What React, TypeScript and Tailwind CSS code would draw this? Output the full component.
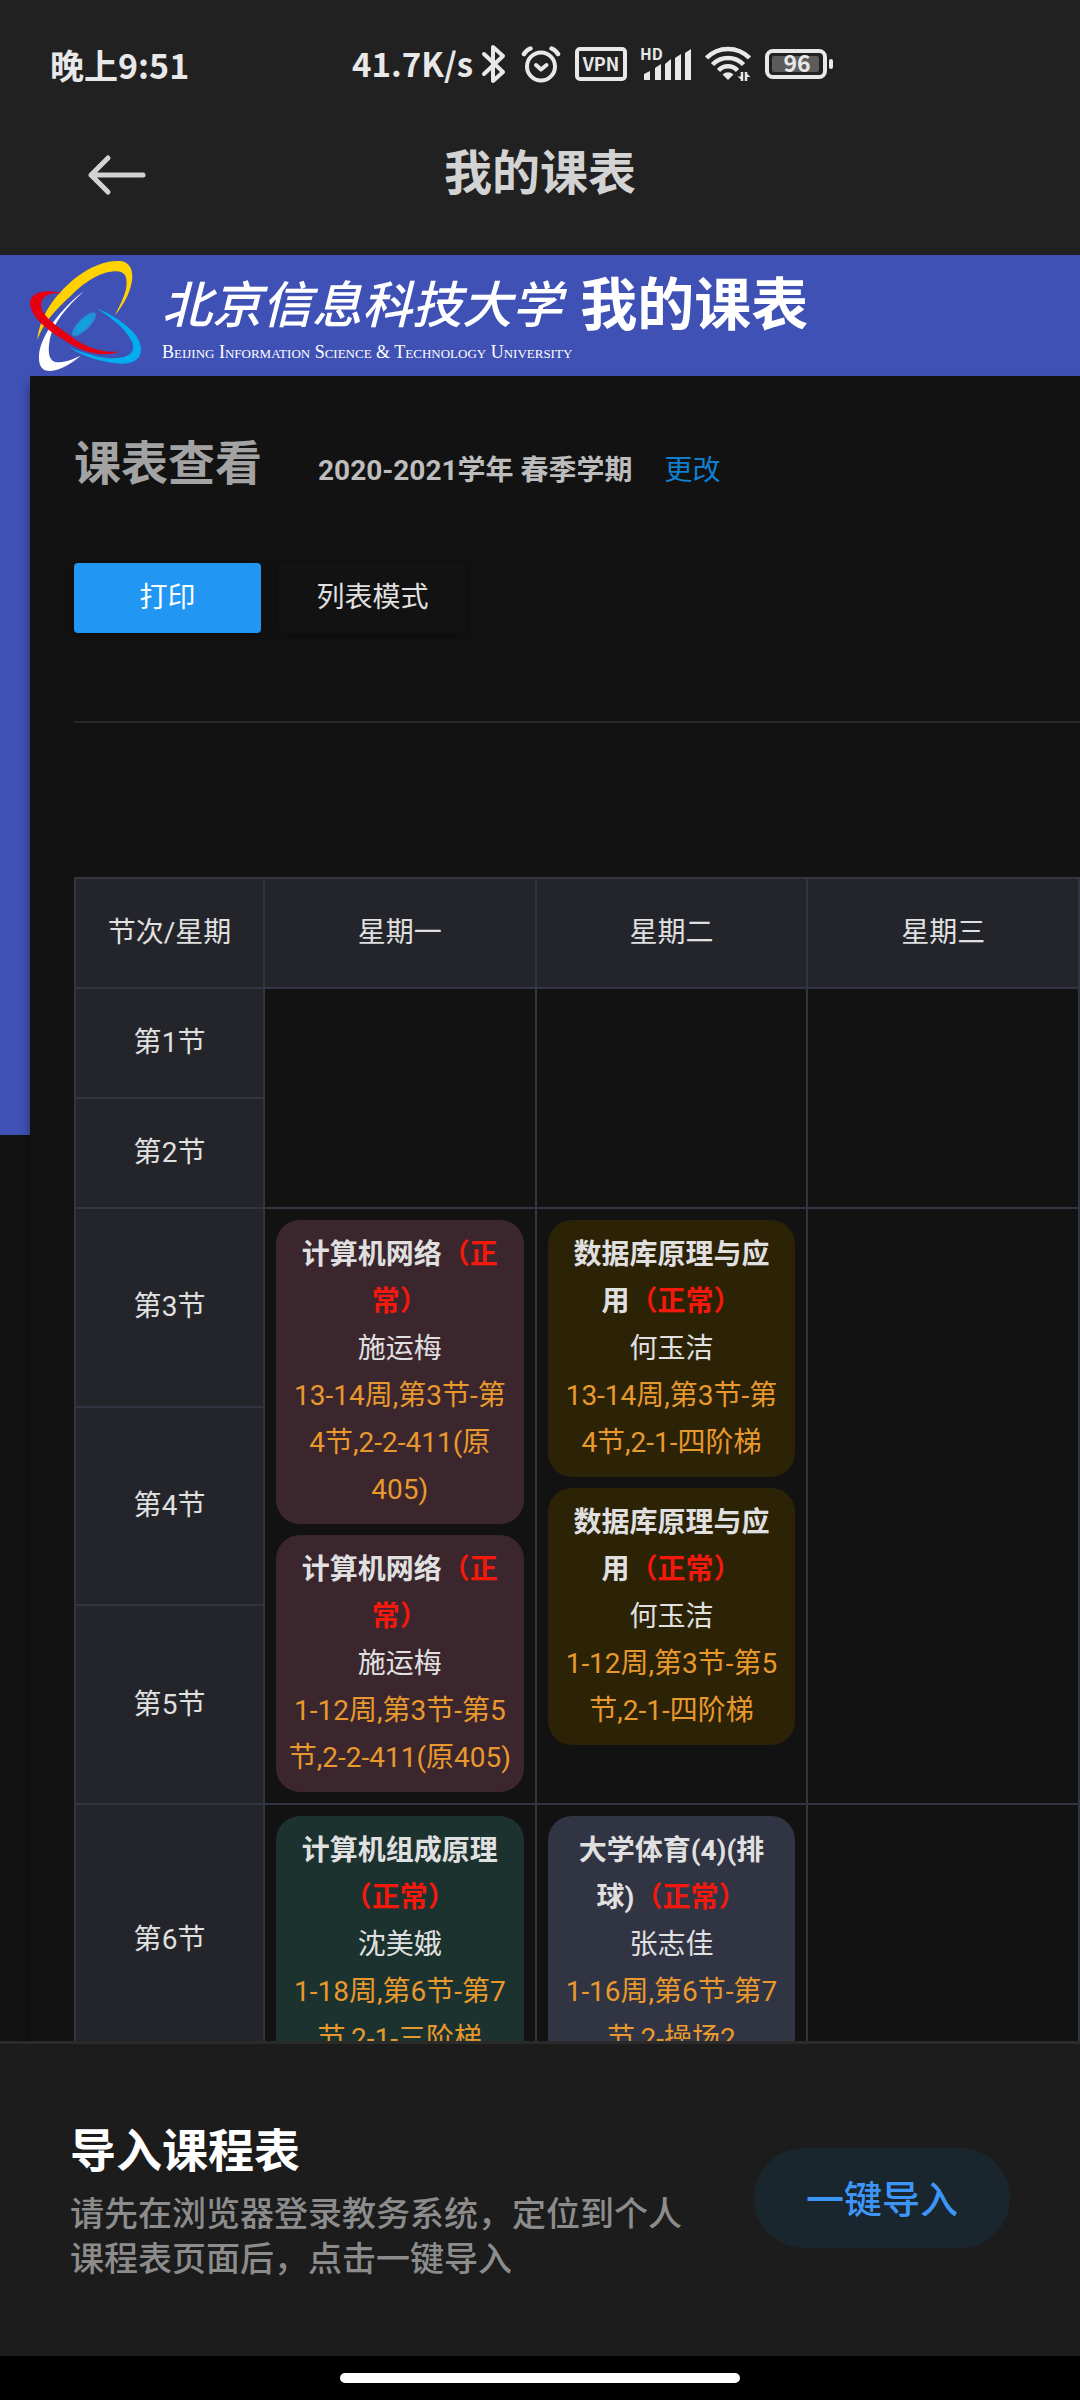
import React from "react";

type Course = {
  name: string[];
  statusOnOwnLine?: boolean;
  status: string[];
  teacher: string;
  place: string[];
  tone: string;
};

const ROSE = "bg-[#3b262e]";
const OLIVE = "bg-[#2c2206]";
const TEAL = "bg-[#1c322f]";
const SLATE = "bg-[#313443]";

const network = { name: ["计算机网络"], status: ["（正", "常）"], teacher: "施运梅", tone: ROSE };
const database = { name: ["数据库原理与应", "用"], status: ["（正常）"], teacher: "何玉洁", tone: OLIVE };

const mondayLate: Course[] = [
  { ...network, place: ["13-14周,第3节-第", "4节,2-2-411(原", "405)"] },
  { ...network, place: ["1-12周,第3节-第5", "节,2-2-411(原405)"] },
];
const tuesdayLate: Course[] = [
  { ...database, place: ["13-14周,第3节-第", "4节,2-1-四阶梯"] },
  { ...database, place: ["1-12周,第3节-第5", "节,2-1-四阶梯"] },
];
const mondayNoon: Course[] = [
  {
    name: ["计算机组成原理"],
    statusOnOwnLine: true,
    status: ["（正常）"],
    teacher: "沈美娥",
    place: ["1-18周,第6节-第7", "节,2-1-三阶梯"],
    tone: TEAL,
  },
];
const tuesdayNoon: Course[] = [
  {
    name: ["大学体育(4)(排", "球)"],
    status: ["（正常）"],
    teacher: "张志佳",
    place: ["1-16周,第6节-第7", "节,2-操场2"],
    tone: SLATE,
  },
];

function Lines({ items }: { items: string[] }) {
  return (
    <>
      {items.map((line, i) => (
        <React.Fragment key={i}>
          {i > 0 && <br />}
          {line}
        </React.Fragment>
      ))}
    </>
  );
}

function CourseCard({ course }: { course: Course }) {
  return (
    <article className={"rounded-3xl py-[11px] text-center leading-[47px] whitespace-nowrap " + course.tone}>
      <h3 className="font-bold">
        <Lines items={course.name} />
        {course.statusOnOwnLine && <br />}
        <span className="text-[#f5180c]">
          <Lines items={course.status} />
        </span>
      </h3>
      <p>{course.teacher}</p>
      <p className="text-[#e8992d]">
        <Lines items={course.place} />
      </p>
    </article>
  );
}

const line = "border-2 border-[#333543] ";

function Slot({ span, courses = [] }: { span: number; courses?: Course[] }) {
  return (
    <td rowSpan={span} className={line + "p-[11px] align-top"}>
      <div className="flex flex-col gap-[11px]">
        {courses.map((c, i) => (
          <CourseCard key={i} course={c} />
        ))}
      </div>
    </td>
  );
}

function Period({ n }: { n: number }) {
  return (
    <th scope="row" className={line + "bg-[#24252b] font-normal"}>
      第{n}节
    </th>
  );
}

function StatusBar() {
  return (
    <div className="flex h-[128px] items-center justify-between pr-[247px] pl-[50px] text-[33px] font-bold text-[#e8e8e8]">
      <span className="text-[34px]">晚上9:51</span>
      <div className="flex items-center gap-3.5">
        <div className="flex items-center gap-2">
          <span>41.7K/s</span>
          <svg width="26" height="40" viewBox="0 0 26 40" fill="none" stroke="currentColor" strokeWidth="4" strokeLinecap="round" strokeLinejoin="round">
            <path d="M3 10 L22 28 L12 37 V3 L22 12 L3 30" />
          </svg>
        </div>
        <svg width="40" height="38" viewBox="0 0 40 38" fill="none" stroke="currentColor" strokeLinecap="round">
          <circle cx="20" cy="21.500" r="14" strokeWidth="4" />
          <path d="M3 9 Q5.500 5 9.500 3.500 M37 9 Q34.500 5 30.500 3.500" strokeWidth="4.500" />
          <path d="M15 20 L20 24.500 L25.500 20" strokeWidth="4" strokeLinejoin="round" />
        </svg>
        <svg width="52" height="34" viewBox="0 0 52 34" className="overflow-visible">
          <rect x="2" y="2" width="48" height="30" rx="3" fill="none" stroke="currentColor" strokeWidth="4" />
          <text x="26" y="23.500" textAnchor="middle" fontSize="18" fill="currentColor">VPN</text>
        </svg>
        <svg width="50" height="36" viewBox="0 0 50 36" fill="currentColor" className="overflow-visible">
          <text x="-1" y="14" fontSize="15.500">HD</text>
          <path d="M3 28 L9 25 V34 H3Z M14 22 L20 18 V34 H14Z M24 18 L30 13 V34 H24Z M34 12 L40 8 V34 H34Z M44 7 L50 3 V34 H44Z" />
        </svg>
        <svg width="46" height="36" viewBox="0 0 46 36" fill="none" stroke="currentColor" strokeWidth="4.500">
          <path d="M1.500 12 A30 30 0 0 1 44.500 12" />
          <path d="M7.500 18.500 A21.500 21.500 0 0 1 38.500 18.500" />
          <path d="M13.500 24.500 A13 13 0 0 1 32.500 24.500" />
          <path d="M17.500 28.500 Q23 24 28.500 28.500 L23 34Z" fill="currentColor" stroke="none" />
          <path d="M37 26 V35 M41 26 V35" strokeWidth="2.500" />
          <path d="M38 35 L32.500 30.500 H37Z M40 26 L45.500 31 H41Z" fill="currentColor" stroke="none" />
        </svg>
        <svg width="68" height="32" viewBox="0 0 68 32" className="overflow-visible">
          <rect x="2" y="3" width="58" height="26" rx="6" fill="none" stroke="currentColor" strokeWidth="4" />
          <rect x="7" y="8" width="47" height="16" rx="2" fill="#5c5c5c" />
          <rect x="64" y="11" width="4" height="10" rx="2" fill="currentColor" />
          <text x="32" y="24" textAnchor="middle" fontSize="23" fill="currentColor">96</text>
        </svg>
      </div>
    </div>
  );
}

function UniversityEmblem() {
  return (
    <svg className="shrink-0" width="112" height="112" viewBox="90 60 336 336" aria-hidden="true">
      <defs>
        <radialGradient id="core">
          <stop offset="0.4" stopColor="#12a2df" />
          <stop offset="1" stopColor="#2b86d2" />
        </radialGradient>
      </defs>
      <ellipse cx="252" cy="253" rx="48" ry="17" fill="url(#core)" transform="rotate(-45 252 253)" />
      <path fill="#ffd200" d="M112 300 C120 225 165 165 225 115 C275 75 325 60 360 63 C400 66 402 110 392 140 C382 175 365 200 345 226 C362 190 376 165 379 140 C383 110 375 93 345 94 C300 95 250 130 215 165 C160 215 130 250 112 300Z" />
      <path fill="#fff" d="M250 155 C200 190 130 270 118 335 C112 385 130 398 165 391 C195 384 225 362 242 347 C215 360 185 370 165 366 C145 358 143 335 150 295 C160 250 200 200 250 155Z" />
      <path fill="#00aeef" d="M290 206 C345 225 420 275 423 325 C424 365 390 375 345 370 C290 362 240 345 207 320 C250 340 300 355 345 355 C385 353 405 340 398 310 C385 275 340 235 290 206Z" />
      <path fill="#e60012" d="M185 160 C150 148 92 150 90 188 C92 235 150 275 200 305 C250 338 310 352 358 335 C310 338 260 325 215 290 C170 258 118 225 124 190 C128 162 160 158 185 160Z" />
    </svg>
  );
}

export default function App() {
  return (
    <div className="flex h-screen flex-col overflow-hidden bg-[#121212] font-[Roboto,'Noto_Sans_CJK_SC',sans-serif] text-[28px] text-[#e0e0e0]">
      <header className="shrink-0 bg-[#212121] pb-[33px] font-['Noto_Sans_CJK_SC',sans-serif]">
        <StatusBar />
        <div className="grid h-[94px] grid-cols-[1fr_auto_1fr] items-center px-[86px] text-[#d3d3d3]">
          <button type="button" aria-label="返回" className="justify-self-start">
            <svg width="60" height="42" viewBox="0 0 60 42" fill="none" stroke="currentColor" strokeWidth="5" strokeLinecap="round" strokeLinejoin="round">
              <path d="M22 4 L5 21 L22 38 M5 21 H57" />
            </svg>
          </button>
          <h1 className="pb-3 text-[48px] leading-[64px] font-bold">我的课表</h1>
        </div>
      </header>

      <main className="min-h-0 flex-1 overflow-hidden">
        <div className="flex h-[121px] items-center bg-[#3f51b5] pl-[30px] text-white">
          <UniversityEmblem />
          <div className="ml-[20px] flex flex-col pt-1">
            <span className="text-[50px] leading-[68px] font-medium italic">北京信息科技大学</span>
            <span className="font-['Liberation_Serif',serif] text-[18px] leading-6 whitespace-nowrap [font-variant-caps:small-caps]">
              Beijing Information Science &amp; Technology University
            </span>
          </div>
          <h2 className="mb-5 ml-2 text-[57px] leading-[72px] font-bold">我的课表</h2>
        </div>

        <div className="flex items-start">
          <div className="h-[759px] w-[30px] shrink-0 bg-[#3f51b5]" />
          <section className="min-w-0 flex-1 bg-[#121212] pl-[44px] shadow-[0_8px_10px_rgba(0,0,0,0.4)]">
            <div className="flex items-baseline pt-[52px]">
              <h2 className="text-[47px] leading-[72px] font-bold text-[#a3a3a3]">课表查看</h2>
              <span className="ml-[56px] font-bold text-[#bdbdbd]">2020-2021学年 春季学期</span>
              <a href="#term" className="ml-[32px] text-[#0f7fd0]">更改</a>
            </div>
            <div className="mt-[63px] flex gap-[18px] leading-[70px]">
              <button type="button" className="w-[187px] rounded-sm bg-[#2196f3] text-white shadow-[0_2px_10px_rgba(0,0,0,0.4)]">打印</button>
              <button type="button" className="w-[187px] rounded-sm bg-[#121212] shadow-[0_2px_10px_rgba(0,0,0,0.4)]">列表模式</button>
            </div>
            <hr className="mt-[88px] border-t-2 border-[#272727]" />
            <table className="mt-[154px] w-full table-fixed border-collapse text-center">
              <thead>
                <tr className="h-[110px] bg-[#24252b]">
                  <th scope="col" className={line + "w-[189px] font-normal"}>节次/星期</th>
                  <th scope="col" className={line + "font-normal"}>星期一</th>
                  <th scope="col" className={line + "font-normal"}>星期二</th>
                  <th scope="col" className={line + "font-normal"}>星期三</th>
                </tr>
              </thead>
              <tbody>
                <tr className="h-[110px]">
                  <Period n={1} />
                  <Slot span={2} />
                  <Slot span={2} />
                  <Slot span={2} />
                </tr>
                <tr className="h-[110px]">
                  <Period n={2} />
                </tr>
                <tr>
                  <Period n={3} />
                  <Slot span={3} courses={mondayLate} />
                  <Slot span={3} courses={tuesdayLate} />
                  <Slot span={3} />
                </tr>
                <tr>
                  <Period n={4} />
                </tr>
                <tr>
                  <Period n={5} />
                </tr>
                <tr className="h-[272px]">
                  <Period n={6} />
                  <Slot span={2} courses={mondayNoon} />
                  <Slot span={2} courses={tuesdayNoon} />
                  <Slot span={2} />
                </tr>
                <tr className="h-[272px]">
                  <Period n={7} />
                </tr>
              </tbody>
            </table>
          </section>
        </div>
      </main>

      <footer className="shrink-0 font-['Noto_Sans_CJK_SC',sans-serif]">
        <div className="flex h-[315px] items-center justify-between border-t-[3px] border-[#2a2a2a] bg-[#1c1c1c] px-[70px]">
          <div className="pb-2">
            <h2 className="mb-2 text-[46px] leading-[68px] font-bold text-white">导入课程表</h2>
            <p className="text-[34px] leading-[45px] font-medium text-[#8c8c8c]">
              请先在浏览器登录教务系统，定位到个人
              <br />
              课程表页面后，点击一键导入
            </p>
          </div>
          <button type="button" className="mb-1 h-[100px] w-[256px] shrink-0 rounded-full bg-[#1a262d] pb-1 text-[38px] font-medium text-[#3d96f7]">一键导入</button>
        </div>
        <div className="flex h-[44px] items-center justify-center bg-black">
          <div className="h-[10px] w-[400px] rounded-full bg-white" />
        </div>
      </footer>
    </div>
  );
}
